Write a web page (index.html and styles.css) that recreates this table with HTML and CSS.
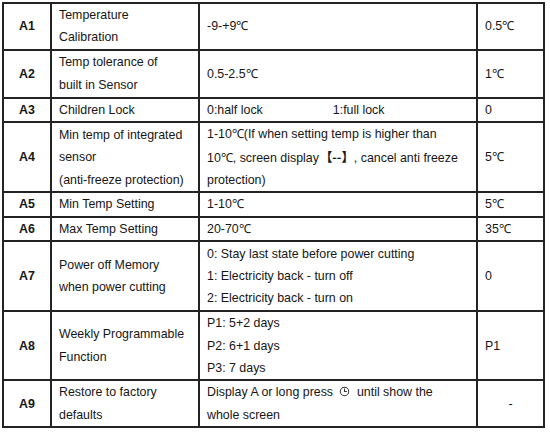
FILE: index.html
```html
<!DOCTYPE html>
<html>
<head>
<meta charset="utf-8">
<link rel="stylesheet" href="styles.css">
</head>
<body>
<table class="params">
  <colgroup>
    <col class="c-code">
    <col class="c-name">
    <col class="c-range">
    <col class="c-def">
  </colgroup>
  <tbody>
    <tr class="h47">
      <td class="code">A1</td>
      <td>Temperature<br>Calibration</td>
      <td>-9-+9℃</td>
      <td>0.5℃</td>
    </tr>
    <tr class="h48">
      <td class="code">A2</td>
      <td>Temp tolerance of<br>built in Sensor</td>
      <td>0.5-2.5℃</td>
      <td>1℃</td>
    </tr>
    <tr class="h25">
      <td class="code">A3</td>
      <td>Children Lock</td>
      <td><span class="opt">0:half lock</span><span class="opt2">1:full lock</span></td>
      <td>0</td>
    </tr>
    <tr class="h70">
      <td class="code">A4</td>
      <td>Min temp of integrated<br>sensor<br>(anti-freeze protection)</td>
      <td>1-10℃(If when setting temp is higher than<br>10℃, screen display<span class="cjk">【--】</span>, cancel anti freeze<br>protection)</td>
      <td>5℃</td>
    </tr>
    <tr class="h24">
      <td class="code">A5</td>
      <td>Min Temp Setting</td>
      <td>1-10℃</td>
      <td>5℃</td>
    </tr>
    <tr class="h25">
      <td class="code">A6</td>
      <td>Max Temp Setting</td>
      <td>20-70℃</td>
      <td>35℃</td>
    </tr>
    <tr class="h71">
      <td class="code">A7</td>
      <td>Power off Memory<br>when power cutting</td>
      <td>0: Stay last state before power cutting<br>1: Electricity back - turn off<br>2: Electricity back - turn on</td>
      <td>0</td>
    </tr>
    <tr class="h70">
      <td class="code">A8</td>
      <td>Weekly Programmable<br>Function</td>
      <td>P1: 5+2 days<br>P2: 6+1 days<br>P3: 7 days</td>
      <td>P1</td>
    </tr>
    <tr class="h46">
      <td class="code">A9</td>
      <td>Restore to factory<br>defaults</td>
      <td>Display A or long press <svg class="clock" viewBox="0 0 12 12" width="11" height="11"><circle cx="6" cy="6" r="4.6" fill="none" stroke="#333" stroke-width="1.1"/><path d="M6 2.6V6H8.6" fill="none" stroke="#333" stroke-width="1.1"/></svg> until show the<br>whole screen</td>
      <td class="center">-</td>
    </tr>
  </tbody>
</table>
</body>
</html>
```
FILE: styles.css
```css
html, body {
  margin: 0;
  padding: 0;
  background: #ffffff;
}
body {
  font-family: "Liberation Sans", Arial, sans-serif;
  font-size: 12.4px;
  color: #161616;
}
.params {
  border-collapse: collapse;
  table-layout: fixed;
  width: 543px;
  margin: 2px 0 0 2px;
}
.c-code { width: 48px; }
.c-name { width: 148px; }
.c-range { width: 278px; }
.c-def { width: 67px; }
.params td {
  border: 2px solid #232323;
  padding: 0 4px 0 7px;
  line-height: 22.4px;
  vertical-align: middle;
  white-space: nowrap;
}
.params td.code {
  font-weight: bold;
  text-align: center;
  padding: 0;
}
.params td.center {
  text-align: center;
  padding: 0;
}
.h24 { height: 22px; }
.h25 { height: 23px; }
.h46 { height: 44px; }
.h47 { height: 45px; }
.h48 { height: 48px; }
.h70 { height: 68px; }
.h71 { height: 70px; }
.opt2 {
  margin-left: 70px;
}
.cjk {
  font-family: "Noto Sans CJK SC", sans-serif;
  font-weight: bold;
  margin-left: 1px;
}
.clock {
  vertical-align: -1px;
  margin: 0 3px;
}
```
